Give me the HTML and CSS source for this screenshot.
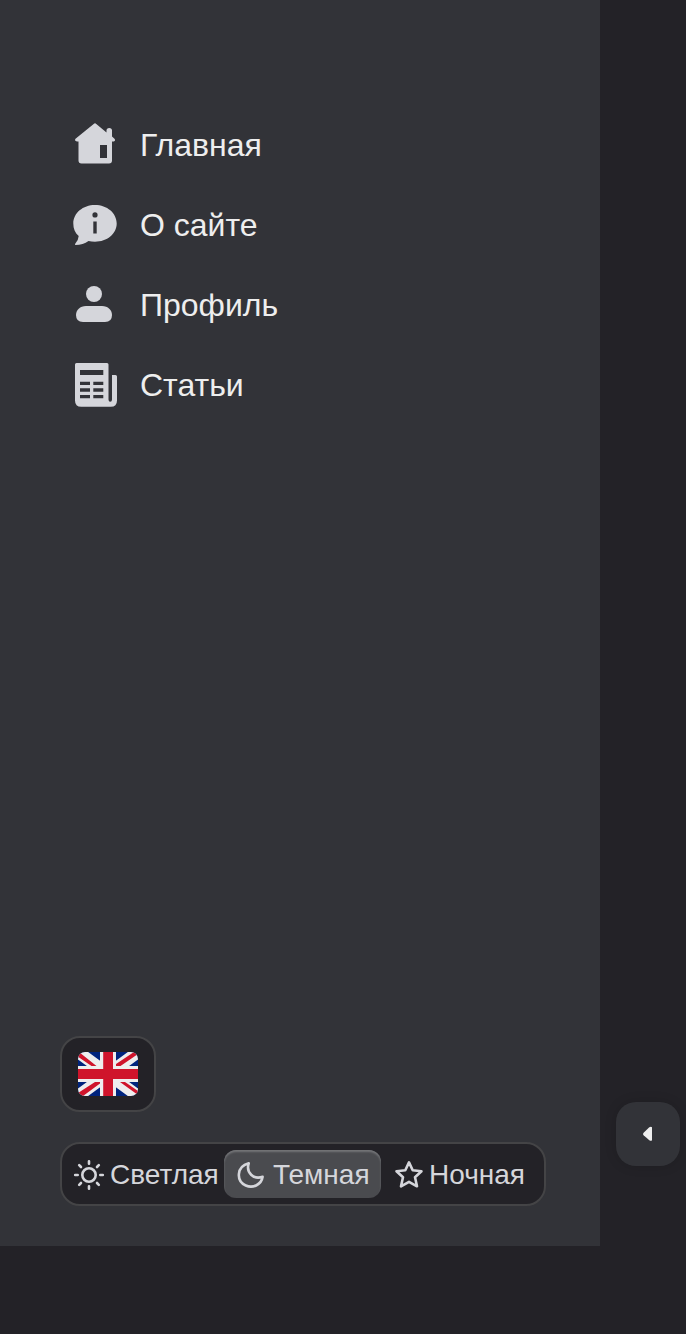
FILE: index.html
```html
<!DOCTYPE html>
<html lang="ru">
<head>
<meta charset="utf-8">
<title>Меню</title>
<link rel="stylesheet" href="styles.css">
</head>
<body>
<div class="layout">
  <aside class="sidebar">
    <nav class="nav">
      <a class="nav-item"><svg class="nav-icon" viewBox="0 0 48 48"><path fill-rule="evenodd" d="M22.700 4 Q24 2.600 25.300 4 L35.500 12.500 V10.500 Q35.500 8 38.200 8 Q41 8 41 10.500 V16.500 L43.500 18.700 Q45 20.600 42.800 21.400 H41 V40.500 Q41 43.500 38 43.500 H10.500 Q7.500 43.500 7.500 40.500 V21.400 H6 Q3 20.800 4.500 18.700 Z M29 25 V38 H36 V25 Z"/></svg><span>Главная</span></a>
      <a class="nav-item"><svg class="nav-icon" viewBox="0 0 48 48"><path fill-rule="evenodd" d="M24 5 C36 5 45.700 13 45.700 23.500 C45.700 34 36 41.700 24 41.700 Q20.500 41.700 17.500 41 C14 43.500 9.500 45 4.500 45 Q3.500 44.700 4.200 43.700 Q7.500 40 7.700 36 C4 33 2.300 28.500 2.300 23.500 C2.300 13 12 5 24 5 Z M24 12.300 A2.600 2.600 0 1 0 24 17.500 A2.600 2.600 0 1 0 24 12.300 Z M22.300 21.500 V33.500 H25.700 V21.500 Z"/></svg><span>О сайте</span></a>
      <a class="nav-item"><svg class="nav-icon" viewBox="0 0 48 48"><circle cx="23" cy="14" r="8"/><path d="M15 26 H31 C37 26 41 30 41 35 Q41 42 34 42 H12 Q5 42 5 35 C5 30 9 26 15 26 Z"/></svg><span>Профиль</span></a>
      <a class="nav-item"><svg class="nav-icon" viewBox="0 0 48 48"><path fill-rule="evenodd" d="M5.500 3 H36 Q37.500 3 37.500 4.500 V39.500 Q37.500 41.700 39.200 41.700 Q41 41.700 41 39.500 V15 H44.500 Q46 15 46 16.500 V40.500 Q46 46.800 39.700 46.800 H10.300 Q4 46.800 4 40.500 V4.500 Q4 3 5.500 3 Z M9 10 V15 H32.300 V10 Z M9 21.700 V25 H19 V21.700 Z M22.300 21.700 V25 H32.300 V21.700 Z M9 28.300 V31.700 H19 V28.300 Z M22.300 28.300 V31.700 H32.300 V28.300 Z M9 35 V38.300 H19 V35 Z M22.300 35 V38.300 H32.300 V35 Z"/></svg><span>Статьи</span></a>
    </nav>
    <div class="controls">
      <button class="lang" aria-label="English">
        <svg class="flag" viewBox="0 0 60 44">
          <path fill="#00247d" d="M0 0H60V44H0Z"/>
          <path stroke="#eee" stroke-width="12" d="M0 0L60 44M60 0L0 44"/>
          <path fill="#cf142b" d="M0 1.500V4.700L13.500 14H18.500L1 0ZM60 0H56L38 12V14H42.500L60 2ZM0 43V41L17 30H22V31.500L5 44H0ZM60 42.500V39L47 30H42L60 43Z"/>
          <path fill="#eee" d="M22 0H38V14H60V30H38V44H22V30H0V14H22Z"/>
          <path fill="#cf142b" d="M25.200 0H35V17H60V27H35V44H25.200V27H0V17H25.200Z"/>
        </svg>
      </button>
      <div class="themes">
        <button class="theme"><svg class="theme-icon" viewBox="0 0 32 32"><circle cx="16" cy="16" r="6.700"/><path d="M16 2.200V4.700M16 27.300V29.800M2.200 16H4.700M27.300 16H29.800M6.200 6.200L8 8M24 24L25.800 25.800M25.800 6.200L24 8M8 24L6.200 25.800"/></svg><span>Светлая</span></button>
        <button class="theme theme-active"><svg class="theme-icon" viewBox="0 0 32 32"><path d="M13.700 4.300 C1.500 7.500 0.800 22 10.800 26.500 C18 29.700 26.500 25.500 27.600 17.800 C18.500 21 10.800 13.500 13.700 4.300 Z"/></svg><span>Темная</span></button>
        <button class="theme"><svg class="theme-icon" viewBox="0 0 32 32"><path d="M16 3.400L19.700 11.300L28.500 12.200L22 18.300L24 27.300L16 22.800L8 27.300L10 18.300L3.500 12.200L12.300 11.300Z"/></svg><span>Ночная</span></button>
      </div>
    </div>
  </aside>
  <div class="rail"><button class="toggle" aria-label="Свернуть"><svg class="arrow" viewBox="0 0 10 16"><path d="M6.300 1.200Q8 .2 9 1.200V14.300Q8 15.300 6.300 14.300L.6 9.300Q-.5 8 .6 6.700Z"/></svg></button></div>
</div>
</body>
</html>
```
FILE: styles.css
```css
* { box-sizing: border-box; }
body {
  margin: 0;
  min-height: 1334px;
  background: #232227;
  color: #eee;
  font-family: "Liberation Sans", Arial, sans-serif;
}
button {
  margin: 0;
  padding: 0;
  border: 0;
  background: none;
  color: inherit;
  font: inherit;
}
svg { display: block; flex: none; }
.layout { display: flex; height: 1246px; }
.sidebar {
  display: flex;
  flex-direction: column;
  justify-content: space-between;
  width: 600px;
  padding: 120px 54px 40px 60px;
  background: #323338;
}
.nav { display: flex; flex-direction: column; gap: 32px; padding-left: 11px; }
.nav-item {
  display: flex;
  align-items: center;
  gap: 21px;
  height: 48px;
  font-size: 32px;
  line-height: 48px;
  white-space: nowrap;
}
.nav-item span { padding-top: 2px; }
.nav-icon { width: 48px; height: 48px; fill: #d5d6db; }
.controls { display: flex; flex-direction: column; align-items: flex-start; gap: 30px; }
.lang {
  display: flex;
  align-items: center;
  justify-content: center;
  width: 96px;
  height: 76px;
  border: 2px solid #444446;
  border-radius: 20px;
  background: #232227;
}
.flag { width: 60px; height: 44px; border-radius: 7px; }
.themes {
  display: flex;
  align-items: center;
  width: 486px;
  height: 64px;
  padding-left: 5px;
  border: 2px solid #444446;
  border-radius: 20px;
  background: #232227;
}
.theme {
  display: flex;
  align-items: center;
  gap: 5px;
  width: 157px;
  height: 48px;
  padding: 2px 0 0 6px;
  border-radius: 12px;
  color: #d5d6db;
  font-size: 28px;
  line-height: 46px;
  white-space: nowrap;
}
.theme-active {
  gap: 6px;
  padding-left: 11px;
  background: #4a4b4f;
  box-shadow: inset 0 2px 2px #737477;
}
.theme-active + .theme { gap: 4px; padding-left: 12px; }
.theme-icon {
  width: 32px;
  height: 32px;
  fill: none;
  stroke: #d5d6db;
  stroke-width: 2.600;
  stroke-linecap: round;
  stroke-linejoin: round;
}
.rail { display: flex; align-items: flex-end; padding: 0 6px 80px 16px; }
.toggle {
  display: flex;
  align-items: center;
  justify-content: center;
  width: 64px;
  height: 64px;
  border-radius: 20px;
  background: #323338;
  box-shadow: 0 0 12px rgba(0, 0, 0, 0.15);
}
.arrow { width: 10px; height: 16px; fill: #eee; }
```
